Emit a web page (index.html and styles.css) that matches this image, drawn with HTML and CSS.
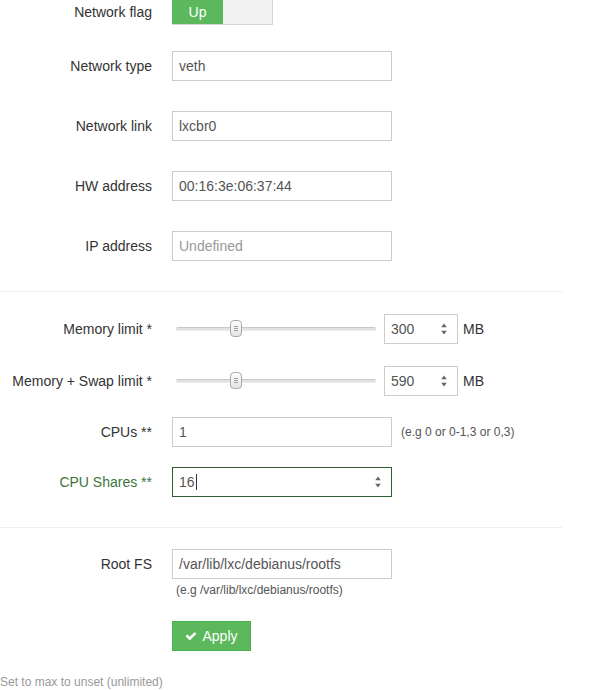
FILE: index.html
```html
<!DOCTYPE html>
<html lang="en">
<head>
<meta charset="utf-8">
<title>Container settings</title>
<link rel="stylesheet" href="styles.css">
</head>
<body>
<form class="form">
  <div class="row row-flag">
    <label class="lbl">Network flag</label>
    <div class="toggle"><span class="toggle-on">Up</span><span class="toggle-off"></span></div>
  </div>

  <div class="row mt-26">
    <label class="lbl">Network type</label>
    <div class="field">veth</div>
  </div>
  <div class="row mt-30">
    <label class="lbl">Network link</label>
    <div class="field">lxcbr0</div>
  </div>
  <div class="row mt-30">
    <label class="lbl">HW address</label>
    <div class="field">00:16:3e:06:37:44</div>
  </div>
  <div class="row mt-30">
    <label class="lbl">IP address</label>
    <div class="field placeholder">Undefined</div>
  </div>

  <hr class="sep mt-30">

  <div class="row mt-22">
    <label class="lbl">Memory limit *</label>
    <div class="slider"><span class="handle"><i></i><i></i><i></i></span></div>
    <div class="field num"><span>300</span>
      <svg class="spin" width="6" height="12" viewBox="0 0 6 12"><path d="M3 0.5L5.8 4.3H0.2Z M3 11.5L5.8 7.7H0.2Z" fill="#666"/></svg>
    </div>
    <span class="unit">MB</span>
  </div>
  <div class="row mt-22">
    <label class="lbl">Memory + Swap limit *</label>
    <div class="slider"><span class="handle"><i></i><i></i><i></i></span></div>
    <div class="field num"><span>590</span>
      <svg class="spin" width="6" height="12" viewBox="0 0 6 12"><path d="M3 0.5L5.8 4.3H0.2Z M3 11.5L5.8 7.7H0.2Z" fill="#666"/></svg>
    </div>
    <span class="unit">MB</span>
  </div>
  <div class="row mt-21">
    <label class="lbl">CPUs **</label>
    <div class="field">1</div>
    <span class="hint hint-side">(e.g 0 or 0-1,3 or 0,3)</span>
  </div>
  <div class="row mt-20 success">
    <label class="lbl">CPU Shares **</label>
    <div class="field num-wide"><span>16<span class="caret"></span></span>
      <svg class="spin" width="6" height="12" viewBox="0 0 6 12"><path d="M3 0.5L5.8 4.3H0.2Z M3 11.5L5.8 7.7H0.2Z" fill="#666"/></svg>
    </div>
  </div>

  <hr class="sep mt-30">

  <div class="row row-top mt-21">
    <label class="lbl">Root FS</label>
    <div class="control">
      <div class="field">/var/lib/lxc/debianus/rootfs</div>
      <span class="hint hint-below">(e.g /var/lib/lxc/debianus/rootfs)</span>
      <button type="button" class="btn-apply">
        <svg width="12" height="12" viewBox="0 0 1792 1792"><path fill="#fff" d="M1671 566q0 40-28 68l-724 724-136 136q-28 28-68 28t-68-28l-136-136-362-362q-28-28-28-68t28-68l136-136q28-28 68-28t68 28l294 295 656-657q28-28 68-28t68 28l136 136q28 28 28 68z"/></svg>
        <span>Apply</span>
      </button>
    </div>
  </div>

  <p class="note">Set to max to unset (unlimited)</p>
</form>
</body>
</html>
```

FILE: styles.css
```css
html, body {
  margin: 0;
  padding: 0;
  background: #fff;
}

body {
  font-family: "Liberation Sans", Arial, Helvetica, sans-serif;
  font-size: 14px;
  color: #333;
}

.form {
  width: 562px;
  margin: 0;
  display: flex;
  flex-direction: column;
}

.row {
  display: flex;
  align-items: center;
}

.row-top {
  align-items: flex-start;
}

.mt-20 { margin-top: 20px; }
.mt-21 { margin-top: 21px; }
.mt-22 { margin-top: 22px; }
.mt-26 { margin-top: 26px; }
.mt-30 { margin-top: 30px; }

.lbl {
  flex: none;
  width: 152px;
  margin-right: 20px;
  text-align: right;
  line-height: 30px;
  font-size: 14px;
  color: #333;
}

.row-flag .lbl {
  line-height: 25px;
}

.toggle {
  display: flex;
  width: 101px;
  height: 25px;
  box-sizing: border-box;
  border: 1px solid #d6d6d6;
  border-top: 0;
}

.toggle-on {
  width: 51px;
  margin-left: -1px;
  background: #5cb85c;
  color: #fff;
  text-align: center;
  line-height: 24px;
  font-size: 14px;
}

.toggle-off {
  flex: 1;
  background: #f2f2f2;
}

.field {
  flex: none;
  width: 220px;
  height: 30px;
  box-sizing: border-box;
  border: 1px solid #ccc;
  padding: 0 6px;
  display: flex;
  align-items: center;
  justify-content: space-between;
  font-size: 14px;
  color: #555;
  background: #fff;
}

.placeholder {
  color: #999;
}

.slider {
  flex: none;
  position: relative;
  width: 200px;
  height: 4px;
  margin: 0 8px 0 4px;
  box-sizing: border-box;
  border-radius: 2px;
  background: #e2e2e2;
  border-top: 1px solid #c8c8c8;
  border-bottom: 1px solid #ececec;
}

.handle {
  position: absolute;
  left: 54px;
  top: -8px;
  width: 12px;
  height: 17px;
  box-sizing: border-box;
  border: 1px solid #aaa;
  border-radius: 4px;
  background: linear-gradient(#fdfdfd, #e4e4e4);
  display: flex;
  flex-direction: column;
  align-items: center;
  justify-content: center;
  gap: 1px;
}

.handle i {
  display: block;
  width: 4px;
  height: 1px;
  background: #a0a0a0;
}

.num {
  width: 74px;
  padding-right: 10px;
}

.num-wide {
  padding-right: 10px;
}

.spin {
  flex: none;
}

.unit {
  margin-left: 5px;
  color: #333;
}

.hint {
  font-size: 12px;
  color: #555;
}

.hint-side {
  margin-left: 9px;
}

.hint-below {
  display: block;
  margin: 3px 0 0 4px;
  line-height: 17px;
}

.success .lbl {
  color: #3c763d;
}

.success .field {
  border-color: #2f5f30;
}

.caret {
  display: inline-block;
  width: 1px;
  height: 16px;
  margin-left: 1px;
  vertical-align: -3px;
  background: #333;
}

.control {
  display: flex;
  flex-direction: column;
  align-items: flex-start;
}

.sep {
  width: 562px;
  height: 0;
  margin-left: 0;
  margin-right: 0;
  margin-bottom: 0;
  border: 0;
  border-top: 1px solid #eee;
}

.btn-apply {
  margin-top: 22px;
  width: 79px;
  height: 30px;
  box-sizing: border-box;
  border: 1px solid #4cae4c;
  background: #5cb85c;
  color: #fff;
  font-family: inherit;
  font-size: 14px;
  padding: 0;
  display: flex;
  align-items: center;
  justify-content: center;
  gap: 5px;
  cursor: pointer;
}

.note {
  margin: 23px 0 0 0;
  font-size: 12px;
  line-height: 17px;
  color: #999;
}
```
